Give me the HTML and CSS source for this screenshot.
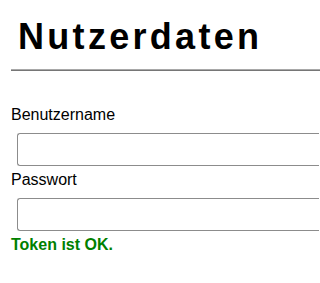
FILE: index.html
```html
<!DOCTYPE html>
<html lang="de">
<head>
<meta charset="utf-8">
<title>Nutzerdaten</title>
<link rel="stylesheet" href="styles.css">
</head>
<body>
<div class="page">
  <h1 class="title">Nutzerdaten</h1>
  <hr class="rule">
  <form class="form">
    <label class="label" for="user">Benutzername</label>
    <input class="field" id="user" type="text">
    <label class="label" for="pass">Passwort</label>
    <input class="field" id="pass" type="password">
    <div class="status">Token ist OK.</div>
  </form>
</div>
</body>
</html>
```
FILE: styles.css
```css
html, body {
  margin: 0;
  padding: 0;
  background: #fff;
  overflow: hidden;
}
.page {
  padding-left: 11px;
  overflow: hidden;
  font-family: "Liberation Sans", Arial, sans-serif;
  font-size: 16px;
  color: #000;
}
.title {
  margin: 16px 0 0 7px;
  font-size: 36px;
  font-weight: bold;
  letter-spacing: 3.3px;
  line-height: normal;
}
.rule {
  margin: 11px 0 0 0;
  height: 0;
  border: 0;
  border-top: 1px solid #a8a8a8;
  border-bottom: 1px solid #767676;
}
.form {
  margin-top: 35px;
  display: flex;
  flex-direction: column;
  align-items: flex-start;
}
.label {
  display: block;
  line-height: normal;
}
.field {
  display: block;
  box-sizing: border-box;
  margin: 9px 0 5px 6px;
  width: 302px;
  height: 33px;
  border: 1px solid #8c8c8c;
  border-right: 0;
  border-radius: 3px 0 0 3px;
  background: #fff;
  padding: 0 6px;
  font: inherit;
}
.status {
  color: #008000;
  font-weight: bold;
  line-height: normal;
}
```
